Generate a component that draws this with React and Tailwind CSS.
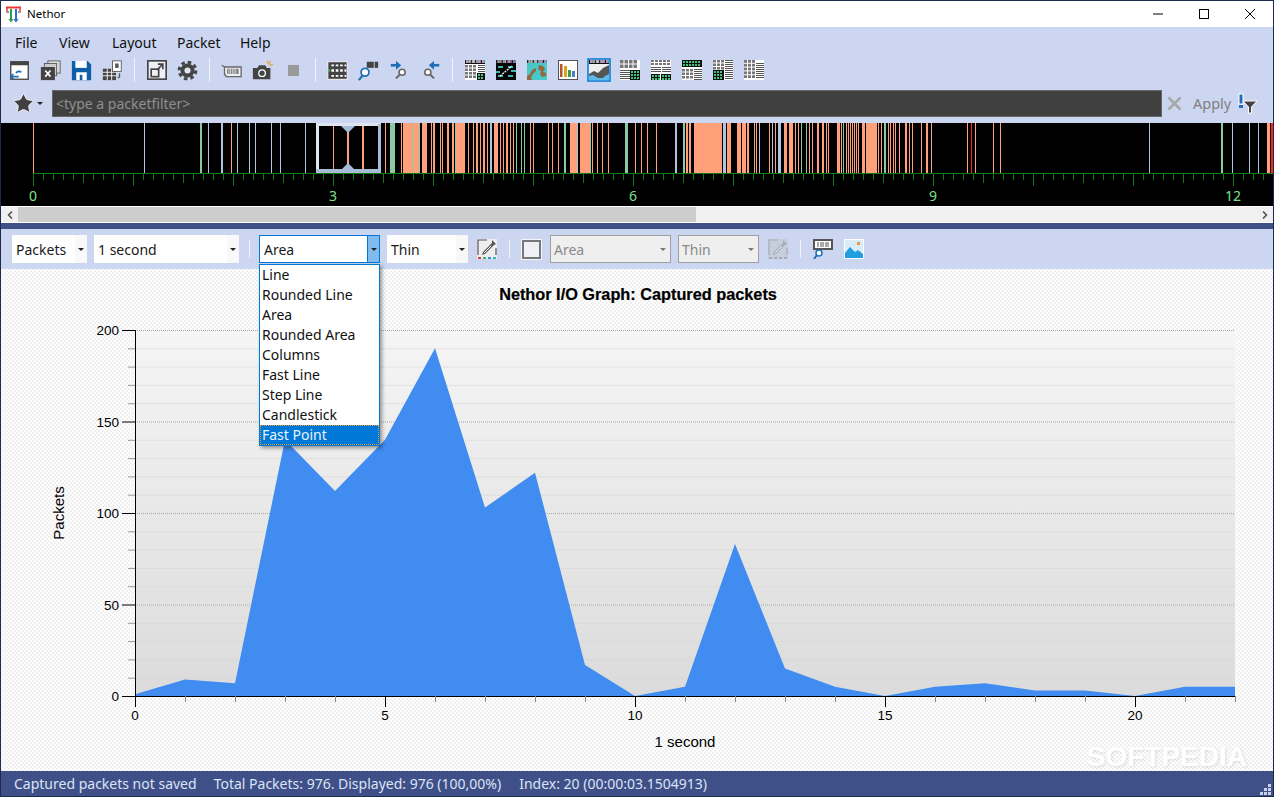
import { X, ChevronLeft, ChevronRight, Star } from 'lucide-react';

const uiFont = "font-['Noto_Sans','Open_Sans',sans-serif]";

const menus = [
  { label: 'File', width: 'w-[44px]' },
  { label: 'View', width: 'w-[53px]' },
  { label: 'Layout', width: 'w-[65px]' },
  { label: 'Packet', width: 'w-[63px]' },
  { label: 'Help', width: 'w-[40px]' },
];
const graphStyles = ['Line', 'Rounded Line', 'Area', 'Rounded Area', 'Columns', 'Fast Line', 'Step Line', 'Candlestick', 'Fast Point'];

// packets per second, read off the graph
const ioData = [1, 9, 7, 140, 112, 140, 190, 103, 122, 17, 0, 5, 83, 15, 5, 0, 5, 7, 3, 3, 0, 5, 5];

const O = '#ffa07a';
const G = '#8cc8a0';
const B = '#b0c4de';
const R = '#ff2020';

const timelineBars = [
  [33, 1, O], [144, 1, B], [200, 2, G], [208, 1, B], [221, 2, B], [231, 1, O], [237, 1, B], [249, 1, B], [255, 1, B],
  [271, 1, B], [280, 1, B], [305, 1, B], [333, 1, O], [347, 2, O], [362, 2, O], [385, 1, O], [390, 5, G], [401, 1, O],
  [403, 17, O], [412, 1, G], [419, 1, G], [422, 5, O], [431, 1, O], [433, 2, O], [440, 1, O], [442, 1, O], [447, 2, O],
  [452, 2, O], [455, 1, G], [456, 9, O], [468, 1, O], [473, 1, O], [476, 2, O], [480, 1, O], [483, 2, O], [487, 1, O],
  [490, 2, B], [494, 4, O], [500, 1, O], [503, 1, O], [506, 2, O], [510, 1, O], [513, 1, O], [516, 1, G], [521, 1, G],
  [524, 1, G], [530, 1, O], [533, 1, O], [548, 1, O], [552, 1, O], [558, 1, O], [564, 2, G], [570, 7, O], [577, 1, B],
  [580, 10, O], [590, 1, G], [592, 1, O], [597, 1, O], [602, 1, O], [608, 1, O], [625, 3, G], [635, 1, O], [641, 1, O],
  [647, 1, O], [656, 1, O], [675, 2, B], [683, 2, G], [686, 2, O], [689, 2, O], [694, 28, O], [723, 3, B], [727, 4, O],
  [737, 4, O], [742, 4, O], [747, 2, O], [754, 1, O], [756, 1, O], [759, 1, B], [769, 1, O], [772, 1, B], [775, 1, O],
  [778, 3, B], [784, 3, O], [789, 4, O], [795, 1, O], [798, 1, O], [801, 1, G], [806, 1, G], [809, 1, O], [812, 1, O],
  [817, 2, O], [822, 2, O], [826, 1, O], [828, 1, O], [837, 3, O], [841, 1, O], [843, 1, G], [846, 1, O], [848, 1, O],
  [850, 1, O], [852, 1, O], [854, 1, O], [856, 1, O], [858, 1, O], [862, 3, O], [866, 11, O], [878, 1, O], [881, 1, O],
  [884, 2, G], [888, 1, O], [890, 1, O], [893, 1, O], [895, 1, O], [899, 1, O], [905, 2, O], [909, 1, O], [912, 1, O],
  [921, 1, O], [926, 2, O], [931, 1, O], [967, 1, O], [971, 1, R], [975, 1, O], [993, 1, O], [1000, 1, O], [1149, 1, B],
  [1221, 2, G], [1232, 1, B], [1249, 1, B], [1258, 1, B], [1267, 3, O], [1271, 3, R],
];

const timelineTicks = Array.from({ length: 125 }, (_, i) => i);

function TitleLogo() {
  return (
    <svg width="16" height="17" viewBox="0 0 16 17" className="shrink-0">
      <path d="M0 1.500h15" stroke="#e53935" strokeWidth="2" />
      <path d="M1 1v4M14 1v4" stroke="#e53935" strokeWidth="1.500" />
      <path d="M3 6H0M15 6h-3" stroke="#333" strokeWidth="1" />
      <path d="M5 3v10" stroke="#2e9e4f" strokeWidth="2" />
      <path d="M2.500 13 5 16.500 7.500 13z" fill="#2e9e4f" />
      <path d="M10 3v10" stroke="#2f6fd0" strokeWidth="2" />
      <path d="M7.500 13 10 16.500 12.500 13z" fill="#2f6fd0" />
    </svg>
  );
}

// small toolbar drawings, 24 unit box drawn at 20px
function Ico({ children, size = 21 }) {
  return (
    <svg width={size} height={size} viewBox="0 0 24 24" className="shrink-0">
      {children}
    </svg>
  );
}

const OpenIcon = () => (
  <Ico>
    <rect x="2" y="2" width="20" height="20" fill="#fff" stroke="#444" strokeWidth="1.500" />
    <rect x="2" y="2" width="20" height="4" fill="#444" />
    <path d="M8 15a4 4 0 0 1 6-1" fill="none" stroke="#1f6fb5" strokeWidth="2" />
    <path d="M2 19h9M5 16l-3 3 3 3" fill="none" stroke="#1f6fb5" strokeWidth="2" />
  </Ico>
);
const CloseFileIcon = () => (
  <Ico>
    <rect x="9" y="1" width="14" height="14" fill="#ddd" stroke="#555" />
    <rect x="5" y="4" width="14" height="14" fill="#ccc" stroke="#555" />
    <rect x="1" y="8" width="16" height="15" fill="#444" />
    <path d="M6 12l6 7M12 12l-6 7" stroke="#fff" strokeWidth="1.800" />
  </Ico>
);
const SaveIcon = () => (
  <Ico>
    <path d="M1 1h18l4 4v18H1z" fill="#0f5ea8" />
    <rect x="5" y="1" width="13" height="8" fill="#fff" />
    <rect x="6" y="14" width="12" height="9" fill="#fff" />
    <rect x="10" y="17" width="3" height="6" fill="#0f5ea8" />
  </Ico>
);
const ExportIcon = () => (
  <Ico>
    <rect x="1" y="10" width="15" height="13" fill="#444" />
    <path d="M1 14h15M1 18h15M6 10v13M11 10v13" stroke="#fff" strokeWidth="1" />
    <rect x="12" y="1" width="10" height="12" fill="#fff" stroke="#555" />
    <rect x="15" y="4" width="4" height="5" fill="#555" />
    <path d="M20 15v4l-2 2" stroke="#555" strokeWidth="1.500" fill="none" />
  </Ico>
);
const PopoutIcon = () => (
  <Ico size={20}>
    <rect x="1" y="1" width="22" height="22" fill="#eef0f6" stroke="#444" strokeWidth="2" />
    <rect x="5" y="11" width="9" height="9" fill="#eef0f6" stroke="#444" strokeWidth="2" />
    <path d="M12 12l7-7M13 5h6v6" fill="none" stroke="#444" strokeWidth="2" />
  </Ico>
);
const GearIcon = () => (
  <Ico>
    <circle cx="12" cy="12" r="8" fill="#444" />
    <circle cx="12" cy="12" r="9.500" fill="none" stroke="#444" strokeWidth="3.500" strokeDasharray="4 3.460" />
    <circle cx="12" cy="12" r="3.500" fill="#dfe5f5" />
  </Ico>
);
const CardIcon = () => (
  <Ico>
    <path d="M1 6l3 2h19v11H6l-1-2H4V8" fill="#eef0f6" stroke="#666" strokeWidth="1.500" />
    <rect x="7" y="10" width="13" height="6" fill="#777" />
    <path d="M9 10v6M11 10v6M13 10v6M15 10v6M17 10v6" stroke="#fff" strokeWidth="0.800" />
  </Ico>
);
const CameraIcon = () => (
  <Ico>
    <path d="M1 9h5l2-3h7l2 3h4v13H1z" fill="#444" />
    <circle cx="11.500" cy="15" r="4.500" fill="#fff" />
    <circle cx="11.500" cy="15" r="3" fill="#444" />
    <path d="M17 1l1 3M21 1l-2 4M24 5l-4 1" stroke="#e9a23b" strokeWidth="1.500" />
  </Ico>
);
const FramesIcon = () => (
  <Ico>
    <rect x="1" y="2" width="22" height="20" fill="#444" stroke="#fff" />
    <path d="M5 6h3M10 6h3M15 6h3M20 6h2M5 18h3M10 18h3M15 18h3M20 18h2" stroke="#fff" strokeWidth="2" />
    <path d="M5 12h3M10 12h3M15 12h3M20 12h2" stroke="#fff" strokeWidth="3" />
    <path d="M1 9v6l3-3z" fill="#4caf6d" />
  </Ico>
);
const FindIcon = () => (
  <Ico>
    <rect x="10" y="2" width="8" height="7" fill="#444" />
    <rect x="19" y="2" width="4" height="7" fill="#444" />
    <circle cx="8" cy="14" r="4.500" fill="#fff" stroke="#1f6fb5" strokeWidth="2" />
    <path d="M5 18 1 23" stroke="#1f6fb5" strokeWidth="2.400" />
  </Ico>
);
const NextIcon = ({ flip }) => (
  <Ico>
    <g transform={flip ? 'translate(24 0) scale(-1 1)' : undefined}>
      <path d="M2 6h8" stroke="#1f6fb5" strokeWidth="3" />
      <path d="M8 1l6 5-6 5z" fill="#1f6fb5" />
      <circle cx="15" cy="14" r="3.500" fill="#fff" stroke="#666" strokeWidth="1.800" />
      <path d="M12 17l-4 4" stroke="#666" strokeWidth="2.400" />
    </g>
  </Ico>
);

function ColorStrip() {
  const cols = ['#222', '#c9a', '#4a8', '#e8a', '#333', '#7cb', '#d9a', '#333', '#a8c', '#6b8', '#e6c', '#222', '#c7d', '#4a8'];
  return cols.map((c, i) => <rect key={i} x={i * 1.43} y="0" width="1.500" height="3" fill={c} />);
}
function Cells({ x, y, cols, rows, w, h }) {
  const out = [];
  for (let c = 0; c < cols; c++) for (let r = 0; r < rows; r++) {
    out.push(<rect key={c + '-' + r} x={x + c * (w + 1)} y={y + r * (h + 1)} width={w} height={h} fill="#777" />);
  }
  return out;
}
function Lines({ x, y, w, n, step = 2 }) {
  return Array.from({ length: n }, (_, i) => <rect key={i} x={x} y={y + i * step} width={w} height="1" fill="#555" />);
}
function Hex({ x, y, w, h }) {
  const out = [];
  for (let r = 0; r * 3 + 1 < h; r++) {
    for (let c = 0; c * 3 + 2 < w; c++) {
      out.push(<rect key={c + '-' + r} x={x + 1 + c * 3} y={y + 1 + r * 3} width="2" height="2" fill="#3fc47a" />);
    }
  }
  return (
    <>
      <rect x={x} y={y} width={w} height={h} fill="#111" />
      {out}
    </>
  );
}
function Tile({ children }) {
  return (
    <svg width="20" height="20" viewBox="0 0 20 20" className="shrink-0">
      <rect width="20" height="20" fill="#fff" />
      {children}
    </svg>
  );
}

const viewIcons = [
  <Tile key="a"><ColorStrip /><rect y="3" width="20" height="1" fill="#111" /><Cells x={0} y={5} cols={3} rows={4} w={3} h={2.500} /><Lines x={13} y={5} w={7} n={4} /><Hex x={12} y={13} w={8} h={7} /></Tile>,
  <Tile key="b">
    <rect width="20" height="20" fill="#050505" /><ColorStrip />
    <path d="M2 6h5v2H2zM12 6h5v2h-5zM2 15h5v2H2zM12 15h5v2h-5zM0 11h4v2H0zM15 10h5v2h-5z" fill="#39b8b0" />
    <path d="M4 16 16 6" stroke="#fff" strokeWidth="1.300" strokeDasharray="2 1" />
  </Tile>,
  <Tile key="c">
    <rect width="20" height="20" fill="#48c9c9" /><ColorStrip />
    <path d="M0 20v-4l3-2 2-4 4-2 0 3-3 3-2 3 1 3zM12 5l4 1 2 3-2 3 3 1 0 3-4 1-2-3 1-3-3-2z" fill="#97673c" />
  </Tile>,
  <Tile key="d">
    <rect x="0.500" y="0.500" width="19" height="19" fill="#fff" stroke="#555" />
    <rect x="2" y="4" width="2.500" height="13" fill="#b5532a" />
    <rect x="6" y="6" width="3" height="11" fill="#d8a520" />
    <rect x="10" y="10" width="3" height="7" fill="#3c9a4e" />
    <rect x="14" y="11" width="3" height="6" fill="#4a7fd0" />
  </Tile>,
  <svg key="e" width="24" height="24" viewBox="0 0 24 24" className="shrink-0">
    <rect x="1" y="1" width="22" height="22" fill="#eee" stroke="#0078d7" strokeWidth="1.500" />
    <g transform="translate(2 2)"><ColorStrip /></g>
    <rect x="2" y="5" width="20" height="1" fill="#111" />
    <path d="M2 22V16l5-3 4 2 5-5 6-3v15z" fill="#555" />
    <path d="M2 22v-4l4-1 5 3 5 0 2-2 4-2v6z" fill="#5bbcec" />
  </svg>,
  <Tile key="f"><Cells x={0} y={0} cols={4} rows={2} w={3.500} h={3.500} /><Lines x={0} y={10} w={10} n={5} /><Hex x={10} y={10} w={10} h={10} /></Tile>,
  <Tile key="g"><Cells x={0} y={0} cols={5} rows={2} w={3} h={2} /><Lines x={0} y={7} w={10} n={3} /><Lines x={11} y={7} w={9} n={3} /><Hex x={0} y={14} w={9} h={6} /><Hex x={10} y={14} w={10} h={6} /></Tile>,
  <Tile key="h"><Hex x={0} y={0} w={20} h={7} /><Cells x={0} y={9} cols={3} rows={3} w={3} h={2.500} /><Lines x={12} y={9} w={8} n={6} /></Tile>,
  <Tile key="i"><Cells x={0} y={0} cols={3} rows={3} w={3} h={2.500} /><Lines x={12} y={0} w={8} n={10} /><Hex x={0} y={10} w={11} h={10} /></Tile>,
  <Tile key="j"><Cells x={0} y={0} cols={3} rows={5} w={3} h={2.800} /><Lines x={12} y={3} w={8} n={8} /></Tile>,
];

const Sep = ({ className = 'h-[24px] mx-[6px]' }) => <div className={'w-[1px] bg-[#f2f4fa] shrink-0 ' + className} />;

const Slot = ({ children }) => (
  <div className="w-[31px] h-[26px] flex items-center justify-center shrink-0">{children}</div>
);

function ComboArrow({ color = 'border-t-[#222]' }) {
  return <span className={'block w-0 h-0 border-x-[3.5px] border-x-transparent border-t-[3.5px] ' + color} />;
}

function Combo({ label, width }) {
  return (
    <div className={'h-[28px] bg-white flex items-center shrink-0 ' + width}>
      <span className="flex-1 pl-[4px] text-[14px] text-[#1a1a1a] whitespace-nowrap">{label}</span>
      <span className="w-[12px] h-full bg-[#f8f8f8] flex items-center justify-center"><ComboArrow /></span>
    </div>
  );
}

function DisabledCombo({ label, width }) {
  return (
    <div className={'h-[28px] bg-[#efefef] border border-[#a0a0a0] flex items-center shrink-0 ' + width}>
      <span className="flex-1 pl-[3px] text-[14px] text-[#8a8a8a] whitespace-nowrap">{label}</span>
      <span className="w-[14px] flex items-center justify-center"><ComboArrow color="border-t-[#777]" /></span>
    </div>
  );
}

function PickerIcon({ muted }) {
  const c = muted ? '#9a9a9a' : '#555';
  return (
    <svg width="20" height="20" viewBox="0 0 20 20" className={'shrink-0 ' + (muted ? 'opacity-70' : '')}>
      <rect width="20" height="20" fill={muted ? '#c4cad8' : '#eee'} />
      <path d="M1 16V1h9M19 9v7" fill="none" stroke={c} strokeWidth="1.200" />
      <path d="M15 1l4 4-2 1-1 1-8 8-3 1 1-3 8-8 1-1z" fill={c} />
      <path d="M7 14l7-7" stroke="#fff" strokeWidth="1" />
      <rect x="1" y="18" width="3" height="2" fill={muted ? c : '#d9413a'} />
      <rect x="6" y="18" width="3" height="2" fill={muted ? c : '#3fb36a'} />
      <rect x="11" y="18" width="3" height="2" fill={muted ? c : '#2f8fe0'} />
      <rect x="16" y="18" width="3" height="2" fill={muted ? c : '#39b8b0'} />
    </svg>
  );
}

function Timeline() {
  return (
    <svg viewBox="1 123 1272 83" className="block w-full h-[83px] bg-black shrink-0">
      {timelineBars.map(([x, w, c], i) => <rect key={i} x={x} y="123" width={w} height="50" fill={c} />)}
      <rect x="33" y="173" width="1240" height="1" fill="#0f7a0f" />
      {timelineTicks.map((i) => {
        const len = i % 10 === 0 ? 13 : i % 5 === 0 ? 10 : 7;
        return <rect key={i} x={33 + i * 10} y="173" width="1" height={len} fill="#0f7a0f" />;
      })}
      {[0, 3, 6, 9, 12].map((n) => (
        <text key={n} x={33 + n * 100} y="201" textAnchor="middle" fontSize="14" fontFamily="Noto Sans, sans-serif" fill="#7fe08a">{n}</text>
      ))}
      {/* current packet selection */}
      <rect x="317.500" y="124.500" width="62" height="47" fill="none" stroke="#dfe6f2" strokeWidth="3" />
      <rect x="316" y="169" width="65" height="4" fill="#a9bcd6" />
      <rect x="378" y="124" width="3" height="46" fill="#a9bcd6" />
      <path d="M341 126h14l-7 7z" fill="#a9bcd6" />
      <path d="M341 170h14l-7-7z" fill="#a9bcd6" />
    </svg>
  );
}

function ScrollBar() {
  return (
    <div className="h-[15px] mt-[1px] bg-[#f0f0f0] flex shrink-0">
      <div className="w-[17px] flex items-center justify-center"><ChevronLeft size={12} strokeWidth={3.5} className="text-[#555]" /></div>
      <div className="w-[678px] bg-[#cdcdcd]" />
      <div className="flex-1" />
      <div className="w-[17px] flex items-center justify-center"><ChevronRight size={12} strokeWidth={3.5} className="text-[#555]" /></div>
    </div>
  );
}

function IoChart() {
  const px = (i) => 135 + i * 50;
  const py = (v) => 696 - v * 1.83;
  const area = 'M135 696 ' + ioData.map((v, i) => 'L' + px(i) + ' ' + py(v)).join(' ') + ' L1235 696 Z';
  const yMinor = Array.from({ length: 21 }, (_, i) => i * 10);
  const xMinor = Array.from({ length: 23 }, (_, i) => i);
  return (
    <svg viewBox="1 269 1272 502" className="block w-full h-full">
      <defs>
        <linearGradient id="plotBg" x1="0" y1="0" x2="0" y2="1">
          <stop offset="0" stopColor="#f5f5f5" />
          <stop offset="1" stopColor="#dbdbdb" />
        </linearGradient>
      </defs>
      <text x="638" y="300" textAnchor="middle" fontSize="16.300" fontWeight="700" stroke="#000" strokeWidth="0.200" fontFamily="Liberation Sans, sans-serif" fill="#000">Nethor I/O Graph: Captured packets</text>
      <rect x="135" y="330" width="1100" height="366" fill="url(#plotBg)" />
      {yMinor.map((v) => (
        <line key={v} x1="135" x2="1235" y1={py(v) + 0.5} y2={py(v) + 0.5} stroke={v % 50 === 0 ? '#a8a8a8' : '#d4d4d4'} strokeDasharray="1 1" />
      ))}
      <path d={area} fill="#408cf0" />
      <line x1="135.500" x2="135.500" y1="330" y2="697" stroke="#000" />
      <line x1="135" x2="1235" y1="696.500" y2="696.500" stroke="#000" />
      {yMinor.map((v) => (
        v % 50 === 0
          ? <line key={v} x1="122" x2="135" y1={py(v) + 0.5} y2={py(v) + 0.5} stroke="#000" />
          : <line key={v} x1="128" x2="135" y1={py(v) + 0.5} y2={py(v) + 0.5} stroke="#999" />
      ))}
      {xMinor.map((i) => (
        i % 5 === 0
          ? <line key={i} x1={px(i) + 0.5} x2={px(i) + 0.5} y1="696" y2="707" stroke="#000" />
          : <line key={i} x1={px(i) + 0.5} x2={px(i) + 0.5} y1="696" y2="702" stroke="#888" />
      ))}
      <g fontSize="13.500" fontFamily="Liberation Sans, sans-serif" fill="#000">
        {[0, 50, 100, 150, 200].map((v) => (
          <text key={v} x="119" y={py(v) + 5} textAnchor="end">{v}</text>
        ))}
        {[0, 5, 10, 15, 20].map((n) => (
          <text key={n} x={px(n)} y="720" textAnchor="middle">{n}</text>
        ))}
        <text x="685" y="747" textAnchor="middle" fontSize="15">1 second</text>
        <text transform="translate(64 513) rotate(-90)" textAnchor="middle" fontSize="15">Packets</text>
      </g>
    </svg>
  );
}

export default function App() {
  return (
    <div className={'h-screen w-screen flex flex-col overflow-hidden border border-[#1c2c4c] bg-white ' + uiFont}>
      {/* Title bar */}
      <div className="h-[26px] bg-white flex items-center pl-[5px] shrink-0">
        <TitleLogo />
        <span className="ml-[5px] text-[11.5px] text-black">Nethor</span>
        <div className="ml-auto flex items-center">
          <div className="w-[46px] flex justify-center">
            <svg width="10" height="10" viewBox="0 0 10 10"><path d="M0 5h10" stroke="#000" /></svg>
          </div>
          <div className="w-[46px] flex justify-center">
            <svg width="10" height="10" viewBox="0 0 10 10"><rect x="0.500" y="0.500" width="9" height="9" fill="none" stroke="#000" /></svg>
          </div>
          <div className="w-[46px] flex justify-center">
            <svg width="10" height="10" viewBox="0 0 10 10"><path d="M0 0l10 10M10 0 0 10" stroke="#000" /></svg>
          </div>
        </div>
      </div>

      {/* Menu and toolbars */}
      <div className="h-[96px] bg-[#ccd6f0] flex flex-col shrink-0">
        <nav className="h-[30px] flex items-center pl-[14px] pt-[1px] text-[14px] text-[#111]">
          {menus.map((m) => <span key={m.label} className={m.width}>{m.label}</span>)}
        </nav>
        <div className="h-[26px] flex items-center pl-[3px]">
          <Slot><OpenIcon /></Slot>
          <Slot><CloseFileIcon /></Slot>
          <Slot><SaveIcon /></Slot>
          <Slot><ExportIcon /></Slot>
          <Sep />
          <Slot><PopoutIcon /></Slot>
          <Slot><GearIcon /></Slot>
          <Sep />
          <Slot><CardIcon /></Slot>
          <Slot><CameraIcon /></Slot>
          <Slot><div className="w-[11px] h-[11px] bg-[#9a9a9a]" /></Slot>
          <Sep />
          <Slot><FramesIcon /></Slot>
          <Slot><FindIcon /></Slot>
          <Slot><NextIcon /></Slot>
          <Slot><NextIcon flip /></Slot>
          <Sep />
          {viewIcons.map((icon, i) => <Slot key={i}>{icon}</Slot>)}
        </div>
        <div className="h-[27px] mt-[7px] flex items-center">
          <div className="w-[51px] flex items-center pl-[11px] shrink-0">
            <Star size={23} fill="#404040" stroke="#f5f5f5" strokeWidth={1} />
            <span className="ml-[2px]"><ComboArrow /></span>
          </div>
          <div className="flex-1 h-[27px] bg-[#404040] border border-[#666] flex items-center pl-[3px] text-[14px] text-[#8f8f8f]">&lt;type a packetfilter&gt;</div>
          <X size={21} strokeWidth={3} className="ml-[2px] text-[#a8a8a8] shrink-0" />
          <span className="ml-[8px] w-[38px] text-[14.5px] text-[#808080]">Apply</span>
          <svg width="24" height="22" viewBox="0 0 24 22" className="ml-[5px] mr-[13px] shrink-0">
            <rect x="3" y="1" width="4" height="10" fill="#1f6fb5" stroke="#fff" />
            <rect x="3" y="12" width="4" height="3" fill="#1f6fb5" />
            <path d="M7 8h14l-5.500 6v6h-3v-6z" fill="#444" stroke="#fff" />
          </svg>
        </div>
      </div>

      <Timeline />
      <ScrollBar />
      <div className="h-[6px] bg-[#3f5089] shrink-0 mt-[1px]" />

      {/* Graph toolbar */}
      <div className="h-[40px] bg-[#ccd6f0] flex items-center pl-[11px] shrink-0">
        <Combo label="Packets" width="w-[75px]" />
        <div className="w-[7px]" />
        <Combo label="1 second" width="w-[145px]" />
        <Sep className="h-[18px] ml-[10px] mr-[9px]" />
        <div className="w-[121px] h-[28px] bg-white border border-[#0078d7] flex items-center shrink-0">
          <span className="flex-1 pl-[4px] text-[14px] text-[#1a1a1a]">Area</span>
          <span className="w-[12px] h-full bg-[#7fbbec] border-l border-[#0078d7] flex items-center justify-center"><ComboArrow /></span>
        </div>
        <div className="w-[7px]" />
        <Combo label="Thin" width="w-[81px]" />
        <div className="w-[9px]" />
        <PickerIcon />
        <Sep className="h-[18px] mx-[12px]" />
        <div className="w-[19px] h-[19px] bg-[#eef0f6] border-[2px] border-[#777] outline outline-1 outline-[#f4f6fb] shrink-0" />
        <div className="w-[9px]" />
        <DisabledCombo label="Area" width="w-[121px]" />
        <div className="w-[7px]" />
        <DisabledCombo label="Thin" width="w-[81px]" />
        <div className="w-[9px]" />
        <PickerIcon muted />
        <Sep className="h-[18px] mx-[12px]" />
        <svg width="20" height="20" viewBox="0 0 20 20" className="shrink-0">
          <rect width="20" height="11" fill="#555" />
          <rect x="2" y="2" width="16" height="7" fill="#fff" />
          <path d="M5 3v5M8 3v5M10 3v5M13 3v5M15 3v5" stroke="#555" />
          <circle cx="6" cy="14" r="3" fill="#fff" stroke="#1f6fb5" strokeWidth="1.500" />
          <path d="M4 16 1 20" stroke="#1f6fb5" strokeWidth="2" />
        </svg>
        <div className="w-[11px]" />
        <svg width="20" height="20" viewBox="0 0 20 20" className="shrink-0">
          <rect width="20" height="20" fill="#fff" />
          <rect x="1" y="1" width="18" height="18" fill="#d8edf9" />
          <path d="M1 14l5-6 5 5 3-2 5 4v4H1z" fill="#1f9fe0" />
          <rect x="13" y="3" width="3" height="3" fill="#e89a3c" />
        </svg>
      </div>

      {/* Graph */}
      <div className="relative flex-1 min-h-0 bg-white bg-[radial-gradient(#dcdcdc_0.6px,transparent_0.8px),radial-gradient(#dcdcdc_0.6px,transparent_0.8px)] bg-[length:4px_4px] bg-[position:0_0,2px_2px]">
        <IoChart />

        <div className="absolute left-[258px] top-[-5px] w-[121px] h-[182px] bg-white border border-[#0078d7] shadow-[2px_2px_4px_rgba(0,0,0,0.4)] text-[14px] text-[#111]">
          {graphStyles.map((s) => (
            s === 'Fast Point'
              ? <div key={s} className="h-[20px] leading-[19px] pl-[2px] bg-[#0078d7] text-[#e8f2fb] outline-1 -outline-offset-1 outline-dotted outline-[#f59a23]">{s}</div>
              : <div key={s} className="h-[20px] leading-[19px] pl-[2px]">{s}</div>
          ))}
        </div>

        <span className="absolute right-[26px] bottom-[-2px] text-[28px] leading-[32px] font-bold text-white [text-shadow:1px_1px_3px_rgba(0,0,0,0.12)] font-['Liberation_Sans',sans-serif]">SOFTPEDIA</span>
      </div>

      {/* Status bar */}
      <div className="h-[25px] bg-[#3f5089] flex items-center pl-[13px] text-[14px] text-[#dbe3f4] shrink-0 relative">
        <span>Captured packets not saved</span>
        <span className="ml-[17px]">Total Packets: 976. Displayed: 976 (100,00%)</span>
        <span className="ml-[18px]">Index: 20 (00:00:03.1504913)</span>
        <svg width="12" height="12" viewBox="0 0 12 12" className="absolute right-[1px] bottom-[1px]">
          <path d="M8 1h3v3H8zM4 5h3v3H4zM8 5h3v3H8zM0 9h3v3H0zM4 9h3v3H4zM8 9h3v3H8z" fill="#c9d2e8" />
        </svg>
      </div>
    </div>
  );
}
